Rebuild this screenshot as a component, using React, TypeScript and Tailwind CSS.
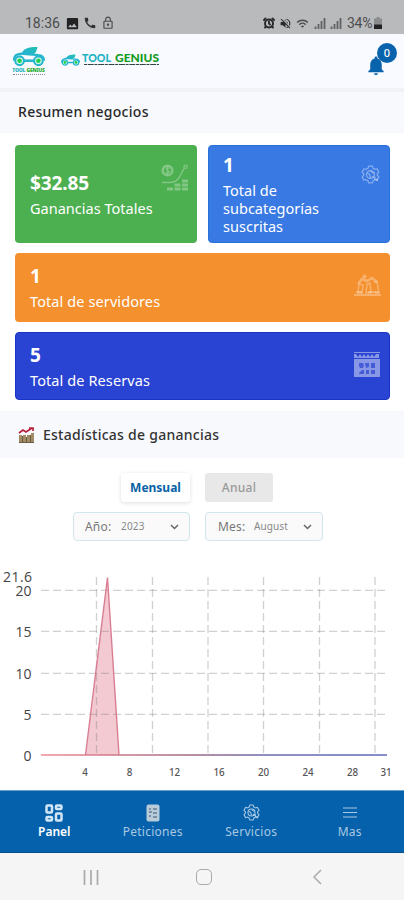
import React from "react";
import { LuAlarmClock } from "react-icons/lu";
import { MdCall, MdImage, MdOutlineLock, MdVolumeOff, MdWifi, MdNotifications } from "react-icons/md";

function Car({ className }: { className: string }) {
  return (
    <svg className={className} viewBox="0 0 34 21">
      <defs>
        <linearGradient id="body" x1="0" x2="1" y1="1" y2="0">
          <stop offset="0" stopColor="#27b0d8" />
          <stop offset="1" stopColor="#20bfae" />
        </linearGradient>
      </defs>
      <path d="M9 8C11 2 16 0.5 26 0.5c-.5 4-3 8.500-7 8.500-4 0-6-.5-10-1z" fill="url(#body)" />
      <path d="M1 15C1 9 4 8 9 7.500c8 1.500 14 .5 18 1.500 4 .5 6 2 6 6" fill="none" stroke="#28b6cf" strokeWidth="2.400" />
      <path d="M11 15h12" stroke="#28b6cf" strokeWidth="2.800" />
      <g fill="#e8fff4" stroke="#28b6cf" strokeWidth="2.300">
        <circle cx="7" cy="15" r="4.600" />
        <circle cx="27" cy="15" r="4.600" />
      </g>
      <g fill="#1fd14b">
        <circle cx="7" cy="15" r="2.500" />
        <circle cx="27" cy="15" r="2.500" />
      </g>
    </svg>
  );
}

function Gear({ className }: { className: string }) {
  return (
    <svg className={className} viewBox="0 0 24 24" fill="none" stroke="currentColor" strokeWidth="1.500" strokeLinejoin="round">
      <path d="M9.500 1.500h5l.7 2.700 2.300 1.300 2.700-.8L22.600 9l-2 2v2l2 2-2.400 4.300-2.700-.8-2.300 1.300-.7 2.700h-5l-.7-2.700-2.300-1.300-2.700.8L1.400 15l2-2v-2l-2-2 2.400-4.300 2.700.8 2.300-1.300z" />
      <circle cx="12" cy="12" r="5" />
      <path d="M8 10l3 2 1 4.500M12 7.500l3 2.500h2M14 14l7 6M17.500 14.500v3.500h4" />
    </svg>
  );
}

function EarningsIcon() {
  return (
    <svg className="h-[27px] w-[28px]" viewBox="0 0 28 27" fill="none" stroke="currentColor">
      <circle cx="6.500" cy="6.500" r="4.800" strokeWidth="2.600" />
      <path d="M8.500 4.500c-3-1.500-4 .8-2 1.800 3 1 2 3.700-1.700 2.200M6.500 2.500v8" strokeWidth="1.300" />
      <path d="M1 18.500h8c7 0 9-4 14-14" strokeWidth="1.500" />
      <circle cx="24.500" cy="2.800" r="1.600" strokeWidth="1.300" />
      <path d="M6 25h6M13.500 25h6M21 25h6M13.500 21h6M21 21h6M21 17h6" strokeWidth="2.800" />
    </svg>
  );
}

function WorkersIcon() {
  return (
    <svg className="h-[23px] w-[27px]" viewBox="0 0 27 23" fill="none" stroke="currentColor">
      <path d="M4 10l4-5 5 2 5-3 5 4" strokeWidth="2.600" />
      <path d="M8.500 2.500a2 2 0 1 1 4 0 2 2 0 1 1-4 0z" fill="currentColor" stroke="none" />
      <path d="M5 10l-1 9h4l1-8zM13 10l-1 9h5l-1-10zM20 8h3l2 11h-4" strokeWidth="1.500" />
      <path d="M0 21h27M2 18h6M14 18h11" strokeWidth="2.200" />
    </svg>
  );
}

function CalendarIcon() {
  return (
    <svg className="h-[25px] w-[26px]" viewBox="0 0 26 25" fill="currentColor">
      <path d="M0 0h26v1H0zM0 2h2l2 3 2-3 2 3 2-3 2 3 2-3 2 3 2-3 2 3 2-3h3v4H0zM0 7h26v18H0z" />
      <g fill="#2941cf" fillOpacity=".7">
        <path d="M5 11h4l1 2-1 3H6l-1-2zM11 11h4v4l-3 1zM17 11h4v5h-4zM5 21l3-3h2v4H5zM12 18h3v4h-3zM17 18h4v4h-4z" />
      </g>
    </svg>
  );
}

function Chart() {
  const horizontal = [590, 631, 673, 714];
  const vertical = [96.5, 152.5, 208, 263.5, 319.5, 375];
  const days = [[4, 85], [8, 129.5], [12, 174.5], [16, 219], [20, 263.5], [24, 308], [28, 352.5], [31, 386]];
  return (
    <svg className="block h-[225px] w-full" viewBox="0 562 404 225">
      <defs>
        <linearGradient id="axis" gradientUnits="userSpaceOnUse" x1="41" y1="755" x2="387" y2="755">
          <stop offset="0" stopColor="#ef8a98" />
          <stop offset=".2" stopColor="#cf7888" />
          <stop offset=".45" stopColor="#9b6a83" />
          <stop offset=".65" stopColor="#6868ab" />
          <stop offset="1" stopColor="#6068b8" />
        </linearGradient>
      </defs>
      <path d="M85.500 755L107.500 577.500 119 755z" fill="#f3c9d2" />
      <g stroke="#777" strokeOpacity=".34" strokeDasharray="8 4" strokeWidth="1.300">
        {horizontal.map((y) => <path key={y} d={`M41 ${y}.3H386`} />)}
        {vertical.map((x) => <path key={x} d={`M${x} 577V755`} />)}
      </g>
      <path d="M41 755H387" stroke="url(#axis)" strokeWidth="1.700" />
      <path d="M85.500 755L107.500 577.500 119 755" fill="none" stroke="#d97e92" strokeWidth="1.400" />
      <g fontFamily="'Open Sans', sans-serif" fontSize="14" fill="#444" textAnchor="end">
        <text x="32" y="582" textLength="29">21.6</text>
        <text x="31.500" y="596">20</text>
        <text x="31.500" y="637">15</text>
        <text x="31.500" y="679">10</text>
        <text x="31.500" y="719.500">5</text>
        <text x="31.500" y="761">0</text>
      </g>
      <g fontFamily="'Noto Sans', sans-serif" fontSize="9.800" fontWeight="500" fill="#555" textAnchor="middle">
        {days.map(([d, x]) => <text key={d} x={x} y="775.500">{d}</text>)}
      </g>
    </svg>
  );
}

function Signal() {
  return (
    <svg className="h-3 w-3" viewBox="0 0 12 12" stroke="#606163" strokeWidth="1.800">
      <path d="M1.500 12V9.500M4.500 12V7M7.500 12V4M10.500 12V1" />
    </svg>
  );
}

function Chevron() {
  return (
    <svg className="h-[6px] w-[9px]" viewBox="0 0 9 6" fill="none" stroke="#666" strokeWidth="1.500">
      <path d="M1 1l3.500 3.500L8 1" />
    </svg>
  );
}

export default function App() {
  return (
    <div className="flex h-[900px] w-[404px] flex-col overflow-hidden bg-white font-['Noto_Sans',sans-serif]">
      <div className="flex h-[34px] items-end justify-between bg-[#b9babc] pb-[3px] pl-[25px] pr-[22px] text-[#4b4c4e]">
        <div className="flex items-center">
          <span className="w-[36px] whitespace-nowrap font-[Roboto,sans-serif] text-[14px] leading-4">18:36</span>
          <MdImage className="ml-1 h-[15px] w-[15px] text-[#222]" />
          <MdCall className="ml-[3px] h-[14px] w-[14px] text-[#303133]" />
          <MdOutlineLock className="ml-[4px] h-[14px] w-[14px]" />
        </div>
        <div className="flex items-center">
          <LuAlarmClock className="h-[12px] w-[12px] text-[#292a2c]" strokeWidth="3.8" />
          <MdVolumeOff className="ml-[4px] h-[13px] w-[13px] text-[#292a2c]" />
          <MdWifi className="ml-[4px] mr-[5px] h-[13px] w-[13px]" />
          <Signal />
          <span className="w-[4px]" />
          <Signal />
          <span className="ml-[5px] w-[27px] whitespace-nowrap font-[Roboto,sans-serif] text-[14px] leading-4 tracking-[-0.3px]">34%</span>
          <svg className="h-[12px] w-[8px]" viewBox="0 0 8 12">
            <path d="M2.500 0h3v1.500H8V12H0V1.500h2.500z" fill="#8b8c8e" />
            <path d="M0 7.500h8V12H0z" fill="#222" />
          </svg>
        </div>
      </div>

      <header className="flex h-[54px] items-start bg-[#f9faff] pl-[12px]">
        <div className="mt-[12px] flex w-[33px] flex-col items-center">
          <Car className="h-[21px] w-[32px]" />
          <div className="mt-px whitespace-nowrap text-[5px] font-black leading-[5px] tracking-[-0.2px] text-[#27b3bd]">TOOL <span className="text-[#2dad36]">GENIUS</span></div>
          <span className="mt-px w-8 border-t border-dotted border-[#888]" />
        </div>
        <Car className="ml-[16px] mt-[20px] h-[12px] w-[19px]" />
        <div className="ml-[2px] mt-[19px] w-[78px]">
          <svg className="block h-[13px] w-[78px]" viewBox="0 0 78 13" fontFamily="Lato, sans-serif" fontWeight="900" fontSize="10.500">
            <text x="0" y="9" textLength="29" lengthAdjust="spacingAndGlyphs" fill="#20b2c4">TOOL</text>
            <text x="33" y="9" textLength="44" lengthAdjust="spacingAndGlyphs" fill="#159b21">GENIUS</text>
            <path d="M2 11.500h75" stroke="#344" strokeWidth="1" strokeDasharray="3 .7 6 .7" />
          </svg>
        </div>
        <div className="relative ml-auto mr-[19px] mt-[20px] h-6 w-[18px] text-[#0862ac]">
          <MdNotifications className="-ml-[3px] h-[23px] w-6" />
          <span className="absolute -top-[11px] left-[10px] flex h-5 w-5 items-center justify-center rounded-full bg-[#0862ac] text-[11px] font-medium text-white">0</span>
        </div>
      </header>

      <section className="flex h-[45px] items-center border-t-[4px] border-[#f1f2f5] bg-[#f8f9fd] pb-[2px] pl-[18px] text-[14px] font-medium tracking-[0.28px] text-[#292929]">Resumen negocios</section>

      <main className="flex flex-col gap-[10px] px-[15px] pr-[14px] pt-[12px] text-white">
        <div className="flex gap-[11px]">
          <div className="flex h-[98px] w-[182px] justify-between rounded-[4px] bg-[#4caf50] pl-[15px] pr-[8px]">
            <div className="pt-[26px]">
              <div className="text-[19px] font-bold leading-6 tracking-[-0.1px]">$32.85</div>
              <div className="mt-[3px] whitespace-nowrap text-[14.5px] leading-[20px] tracking-[0.02px]">Ganancias Totales</div>
            </div>
            <div className="mt-[19px] text-white/30"><EarningsIcon /></div>
          </div>
          <div className="flex h-[98px] w-[182px] justify-between rounded-[4px] border border-[#2971da] bg-[#3979e3] pl-[14px] pr-[9px]">
            <div className="pt-[7px]">
              <div className="text-[19px] font-bold leading-6">1</div>
              <div className="mt-[4px] text-[14.5px] leading-[18px] tracking-[0.02px]">Total de<br />subcategorías<br />suscritas</div>
            </div>
            <Gear className="mt-[19px] h-[19px] w-[19px] text-white/40" />
          </div>
        </div>
        <div className="flex h-[69px] justify-between rounded-[4px] bg-[#f4902d] pl-[15px] pr-[9px]">
          <div className="pt-[11px]">
            <div className="text-[19px] font-bold leading-6">1</div>
            <div className="mt-[3px] text-[14.5px] leading-[20px] tracking-[0.1px]">Total de servidores</div>
          </div>
          <div className="mt-[21px] text-white/30"><WorkersIcon /></div>
        </div>
        <div className="flex h-[68px] justify-between rounded-[4px] border border-[#1934c6] bg-[#2943d3] pl-[14px] pr-[9px]">
          <div className="pt-[10px]">
            <div className="text-[19px] font-bold leading-6">5</div>
            <div className="mt-[3px] text-[14.5px] leading-[20px] tracking-[0.1px]">Total de Reservas</div>
          </div>
          <div className="mt-[19px] text-white/45"><CalendarIcon /></div>
        </div>
      </main>

      <section className="mt-[11px] flex h-[47px] items-center bg-[#f8f9fd] pl-[18px] text-[14px] font-medium text-[#333]">
        <svg className="h-4 w-4" viewBox="0 0 16 16" fill="none">
          <path d="M1 8h3v8H1zM5 8h3v8H5zM9 8h3v8H9zM13 6h3v10h-3z" fill="#a18c66" />
          <path d="M1 15.500h15M4.500 9v6M8.500 10v5M12.500 8v7" stroke="#6a5d47" />
          <path d="M1 6l4-3 3 2 6-4M11 1h4v3" stroke="#b9203b" strokeWidth="1.700" />
        </svg>
        <span className="ml-[9px] tracking-[0.26px]">Estadísticas de ganancias</span>
      </section>

      <div className="mt-[15px] flex h-[29px] justify-center gap-[15px] pr-[10px] text-[12px]">
        <div className="flex w-[69px] items-center justify-center rounded-[3px] bg-white font-bold text-[#0862a5] shadow-[0_1px_4px_rgba(0,0,0,0.13)]">Mensual</div>
        <div className="flex w-[68px] items-center justify-center rounded-[3px] bg-[#e8e8e8] font-medium tracking-[0.3px] text-[#999]">Anual</div>
      </div>
      <div className="mt-[10px] flex h-[29px] gap-[15px] pl-[73px] text-[#777]">
        <div className="flex w-[117px] items-center rounded-[4px] border border-[#d2e6ed] bg-[#fafafa] pl-[11px] pr-[10px]">
          <span className="w-[36px] text-[12px] tracking-[0.2px]">Año:</span>
          <span className="mr-auto text-[10px] tracking-[0.2px] text-[#888]">2023</span>
          <Chevron />
        </div>
        <div className="flex w-[118px] items-center rounded-[4px] border border-[#d2e6ed] bg-[#fafafa] pl-[12px] pr-[10px]">
          <span className="w-[36px] text-[12px] tracking-[0.2px]">Mes:</span>
          <span className="mr-auto text-[10px] tracking-[0.1px] text-[#888]">August</span>
          <Chevron />
        </div>
      </div>

      <div className="mt-[21px] h-[228px]"><Chart /></div>

      <nav className="flex h-[63px] border-y border-t-[#69a2cc] border-b-[#05518f] bg-[#0561ab] px-[5px] text-[12px] leading-4 text-[#a9c8e3]">
        <div className="flex flex-1 flex-col items-center pt-[13px] font-semibold text-white">
          <svg className="h-[18px] w-[18px]" viewBox="0 0 18 18" fill="none" stroke="#d3e6f5" strokeWidth="2.500">
            <rect x="1.500" y="1.500" width="5.500" height="7" rx="1" />
            <rect x="11" y="1.500" width="5.500" height="3.500" rx="1" />
            <rect x="1.500" y="13" width="5.500" height="3.500" rx="1" />
            <rect x="11" y="9.500" width="5.500" height="7" rx="1" />
          </svg>
          <span className="mt-[2px]">Panel</span>
        </div>
        <div className="flex flex-1 flex-col items-center pt-[13px]">
          <svg className="h-[18px] w-[14px]" viewBox="0 0 14 18">
            <rect x=".5" y=".5" width="13" height="17" rx="2" fill="#b8cbd9" />
            <path d="M3 5h2M7 5h4M3 8h3M7 9h4M3 12h2M7 13h4" stroke="#657d92" strokeWidth="1.300" />
          </svg>
          <span className="mt-[2px] tracking-[0.25px]">Peticiones</span>
        </div>
        <div className="flex flex-1 flex-col items-center pt-[13px]">
          <Gear className="h-[17px] w-[17px]" />
          <span className="mt-[3px] tracking-[0.3px]">Servicios</span>
        </div>
        <div className="flex flex-1 flex-col items-center pt-[13px]">
          <svg className="h-[18px] w-[14px]" viewBox="0 0 14 18" stroke="currentColor" strokeWidth="1.200">
            <path d="M0 4h14M0 8.500h14M0 13h14" />
          </svg>
          <span className="mt-[2px] tracking-[0.2px]">Mas</span>
        </div>
      </nav>

      <div className="flex h-[47px] items-center bg-[#f5f5f5] pl-[83px] pt-px">
        <svg className="h-[15px] w-[16px]" viewBox="0 0 16 15" stroke="#aaa" strokeWidth="1.700">
          <path d="M1.500 0v15M8 0v15M14.500 0v15" />
        </svg>
        <span className="ml-[97px] h-[16px] w-[16px] rounded-[5px] border-[1.5px] border-[#aaa]" />
        <svg className="ml-[101px] h-[16px] w-[9px]" viewBox="0 0 9 16" fill="none" stroke="#aaa" strokeWidth="1.500">
          <path d="M8 1L1 8l7 7" />
        </svg>
      </div>
    </div>
  );
}
